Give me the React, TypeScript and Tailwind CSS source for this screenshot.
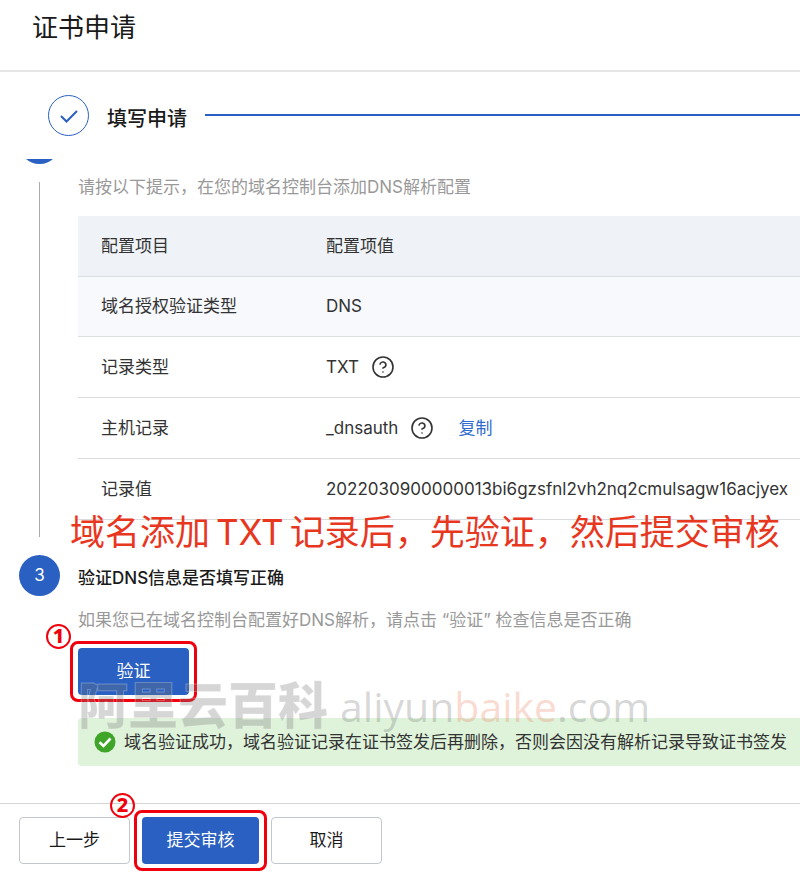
import type { ReactNode } from 'react';
import { CircleHelp } from 'lucide-react';

const RECORDS = [
  { label: '域名授权验证类型', value: 'DNS', highlight: true },
  { label: '记录类型', value: 'TXT', help: true },
  { label: '主机记录', value: '_dnsauth', help: true, copy: true },
  { label: '记录值', value: '2022030900000013bi6gzsfnl2vh2nq2cmulsagw16acjyex' },
];

function StepHeader() {
  return (
    <div className="flex h-[87px] items-start pt-[23px] pl-12">
      <span className="flex size-[41px] shrink-0 items-center justify-center rounded-full border border-[#2a60c2]">
        <svg width="20" height="16" viewBox="0 0 20 16" fill="none" aria-hidden="true">
          <path d="M2 8 7.5 13.5 18 3" stroke="#2a60c2" strokeWidth="2" />
        </svg>
      </span>
      <span className="ml-[18px] pt-[9px] text-[20px] leading-[30px] font-medium whitespace-nowrap">填写申请</span>
      <span className="mt-[19px] ml-[18px] h-[2px] flex-1 bg-[#2a60c2]" />
    </div>
  );
}

function HelpButton() {
  return (
    <button type="button" aria-label="帮助" className="ml-3">
      <CircleHelp size={24} strokeWidth={1.6} />
    </button>
  );
}

function RecordTable() {
  return (
    <table className="w-full table-fixed border-collapse text-left whitespace-nowrap text-[#333]">
      <colgroup>
        <col className="w-[225px]" />
        <col />
      </colgroup>
      <thead>
        <tr className="h-[60px] border-b border-[#dadfe4] bg-[#eff3f8]">
          <th scope="col" className="pl-[23px] font-normal">配置项目</th>
          <th scope="col" className="pl-[23px] font-normal">配置项值</th>
        </tr>
      </thead>
      <tbody>
        {RECORDS.map((r) => (
          <tr
            key={r.label}
            className={r.highlight ? 'h-[60px] border-b border-[#dadfe4] bg-[#f7f9fd]' : 'h-[61px] border-b border-[#d9dbde]'}
          >
            <td className="pl-[23px]">{r.label}</td>
            <td className="pl-[23px]">
              <div className="flex items-center">
                <span>{r.value}</span>
                {r.help && <HelpButton />}
                {r.copy && (
                  <a href="#copy" className="ml-6 text-[#2f6bd0]">
                    复制
                  </a>
                )}
              </div>
            </td>
          </tr>
        ))}
      </tbody>
    </table>
  );
}

// red outline with a numbered marker on its top left corner
function Marked({ no, children }: { no: number; children: ReactNode }) {
  return (
    <div className="relative w-fit">
      {children}
      <span className="pointer-events-none absolute -inset-x-2 -inset-y-[7px] rounded-lg border-[3px] border-[#f0000c]" />
      <span className="pointer-events-none absolute -top-6 -left-8 flex size-[25px] items-center justify-center rounded-full border-2 border-[#f0000c] font-['Noto_Sans',sans-serif] text-[20px] leading-none font-extrabold text-[#f0000c]">
        {no}
      </span>
    </div>
  );
}

function Watermark() {
  return (
    <div className="pointer-events-none absolute -top-[42px] left-0 flex items-center whitespace-nowrap text-[#777]/30">
      <span className="text-[50px] leading-[60px] font-black [-webkit-text-stroke:1px_rgba(255,255,255,0.25)]">
        阿里云百科
      </span>
      <span className="ml-3 font-['Open_Sans',sans-serif] text-[41px] leading-[60px]">
        aliyun<span className="text-[#f08060]/30">baike</span>.com
      </span>
    </div>
  );
}

export default function App() {
  return (
    <div className="overflow-hidden bg-white font-['Inter','Noto_Sans_CJK_SC',sans-serif] text-[17px] leading-[26px] text-[#1a1a1a]">
      <header className="border-b-2 border-[#e5e5e5] px-8 pt-[10px] pb-6">
        <h1 className="text-[26px] leading-[36px]">证书申请</h1>
      </header>

      <StepHeader />

      <main className="overflow-hidden pb-[37px] pl-[19px]">
        <div className="flex gap-[18px]">
          <div className="flex w-[41px] shrink-0 flex-col items-center">
            {/* step 2, scrolled under the step header */}
            <span className="-mt-9 size-[41px] shrink-0 rounded-full bg-[#2a60c2]" />
            <span className="my-[18px] w-px flex-1 bg-[#aaa]" />
          </div>
          <section className="relative min-w-0 flex-1 pt-[15px] pb-[35px]">
            <p className="mb-4 whitespace-nowrap text-[#999]">请按以下提示，在您的域名控制台添加DNS解析配置</p>
            <RecordTable />
            <p className="pointer-events-none absolute -left-2 bottom-px text-[35px] leading-[44px] whitespace-nowrap text-[#e8371f]">
              域名添加<span className="mx-1.5">TXT</span>记录后，先验证，然后提交审核
            </p>
          </section>
        </div>

        <div className="flex gap-[18px]">
          <span className="flex size-[41px] shrink-0 items-center justify-center rounded-full bg-[#2a60c2] text-white">3</span>
          <section className="min-w-0 flex-1 pt-[10px]">
            <h2 className="font-medium whitespace-nowrap">验证DNS信息是否填写正确</h2>
            <p className="mt-4 mb-[15px] whitespace-nowrap text-[#999]">
              如果您已在域名控制台配置好DNS解析，请点击 “验证” 检查信息是否正确
            </p>
            <Marked no={1}>
              <button type="button" className="h-[47px] w-[111px] rounded-sm bg-[#2a60c2] text-white">
                验证
              </button>
            </Marked>
            <div className="relative mt-[23px] flex h-12 items-center rounded-l-sm bg-[#def3da] pl-4 whitespace-nowrap text-[#333]">
              <svg width="22" height="22" viewBox="0 0 22 22" className="shrink-0" aria-hidden="true">
                <circle cx="11" cy="11" r="10.5" fill="#3fa528" />
                <path d="M5.5 11.2 9.5 15 16.5 7.5" fill="none" stroke="#fff" strokeWidth="2.6" />
              </svg>
              <span className="ml-2">域名验证成功，域名验证记录在证书签发后再删除，否则会因没有解析记录导致证书签发</span>
              <Watermark />
            </div>
          </section>
        </div>
      </main>

      <footer className="flex gap-3 border-t border-[#d5d5d5] px-[19px] pt-[13px] pb-[9px]">
        <button type="button" className="h-[47px] w-[111px] rounded-sm border border-[#c3c6cc]">
          上一步
        </button>
        <Marked no={2}>
          <button type="button" className="h-[47px] w-[117px] rounded-sm bg-[#2a60c2] text-white">
            提交审核
          </button>
        </Marked>
        <button type="button" className="h-[47px] w-[111px] rounded-sm border border-[#c3c6cc]">
          取消
        </button>
      </footer>
    </div>
  );
}
